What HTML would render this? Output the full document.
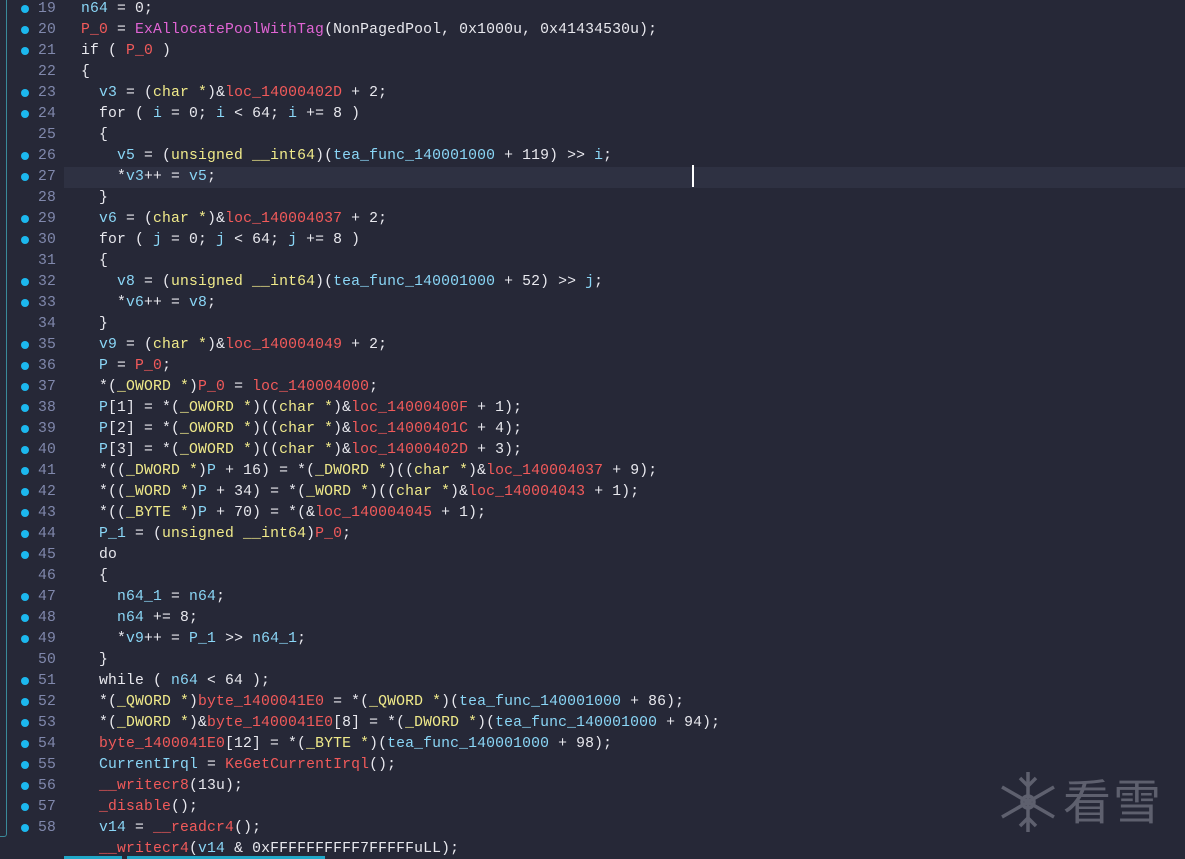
<!DOCTYPE html>
<html><head><meta charset="utf-8"><style>
html,body{margin:0;padding:0;background:#262837;width:1185px;height:859px;overflow:hidden;position:relative}
.frame{position:absolute;left:0;top:-5px;width:6px;height:840px;border:1px solid #3a8a9a;border-left:none;border-radius:0 3px 3px 0}
.code{position:absolute;left:0;top:-1.5px;font-family:"Liberation Mono",monospace;font-size:14.75px;letter-spacing:0.15px;line-height:21px;color:#e8e8ee}
.l{position:relative;height:21px;width:1185px}
.hlbg{position:absolute;left:64px;right:0;top:0;bottom:0;background:#2e3142}
.d{position:absolute;left:21px;top:6px;width:8px;height:8px;border-radius:50%;background:#1cb8ee}
.n{position:absolute;left:38px;color:#8088ac;width:24px;text-align:left}
.c{position:absolute;left:81px;white-space:pre}
.b{color:#8ad6f6}.r{color:#f25a5a}.p{color:#e064d4}.y{color:#f0ea8a}
.cur{position:absolute;left:692px;top:165px;width:2px;height:22px;background:#fff}
.wm{position:absolute;left:1063px;top:768px;font-family:"Noto Sans CJK SC",sans-serif;font-size:48px;color:#5e606e;letter-spacing:2px;line-height:60px}
.bar{position:absolute;top:856px;height:3px;background:#20a8c8}
</style></head><body>
<div class="frame"></div>
<div class="code"><div class="l"><i class="d"></i><span class="n">19</span><span class="c"><span class="b">n64</span> = 0;</span></div><div class="l"><i class="d"></i><span class="n">20</span><span class="c"><span class="r">P_0</span> = <span class="p">ExAllocatePoolWithTag</span>(NonPagedPool, 0x1000u, 0x41434530u);</span></div><div class="l"><i class="d"></i><span class="n">21</span><span class="c">if ( <span class="r">P_0</span> )</span></div><div class="l"><span class="n">22</span><span class="c">{</span></div><div class="l"><i class="d"></i><span class="n">23</span><span class="c">  <span class="b">v3</span> = (<span class="y">char *</span>)&amp;<span class="r">loc_14000402D</span> + 2;</span></div><div class="l"><i class="d"></i><span class="n">24</span><span class="c">  for ( <span class="b">i</span> = 0; <span class="b">i</span> &lt; 64; <span class="b">i</span> += 8 )</span></div><div class="l"><span class="n">25</span><span class="c">  {</span></div><div class="l"><i class="d"></i><span class="n">26</span><span class="c">    <span class="b">v5</span> = (<span class="y">unsigned __int64</span>)(<span class="b">tea_func_140001000</span> + 119) &gt;&gt; <span class="b">i</span>;</span></div><div class="l"><i class="hlbg"></i><i class="d"></i><span class="n">27</span><span class="c">    *<span class="b">v3</span>++ = <span class="b">v5</span>;</span></div><div class="l"><span class="n">28</span><span class="c">  }</span></div><div class="l"><i class="d"></i><span class="n">29</span><span class="c">  <span class="b">v6</span> = (<span class="y">char *</span>)&amp;<span class="r">loc_140004037</span> + 2;</span></div><div class="l"><i class="d"></i><span class="n">30</span><span class="c">  for ( <span class="b">j</span> = 0; <span class="b">j</span> &lt; 64; <span class="b">j</span> += 8 )</span></div><div class="l"><span class="n">31</span><span class="c">  {</span></div><div class="l"><i class="d"></i><span class="n">32</span><span class="c">    <span class="b">v8</span> = (<span class="y">unsigned __int64</span>)(<span class="b">tea_func_140001000</span> + 52) &gt;&gt; <span class="b">j</span>;</span></div><div class="l"><i class="d"></i><span class="n">33</span><span class="c">    *<span class="b">v6</span>++ = <span class="b">v8</span>;</span></div><div class="l"><span class="n">34</span><span class="c">  }</span></div><div class="l"><i class="d"></i><span class="n">35</span><span class="c">  <span class="b">v9</span> = (<span class="y">char *</span>)&amp;<span class="r">loc_140004049</span> + 2;</span></div><div class="l"><i class="d"></i><span class="n">36</span><span class="c">  <span class="b">P</span> = <span class="r">P_0</span>;</span></div><div class="l"><i class="d"></i><span class="n">37</span><span class="c">  *(<span class="y">_OWORD *</span>)<span class="r">P_0</span> = <span class="r">loc_140004000</span>;</span></div><div class="l"><i class="d"></i><span class="n">38</span><span class="c">  <span class="b">P</span>[1] = *(<span class="y">_OWORD *</span>)((<span class="y">char *</span>)&amp;<span class="r">loc_14000400F</span> + 1);</span></div><div class="l"><i class="d"></i><span class="n">39</span><span class="c">  <span class="b">P</span>[2] = *(<span class="y">_OWORD *</span>)((<span class="y">char *</span>)&amp;<span class="r">loc_14000401C</span> + 4);</span></div><div class="l"><i class="d"></i><span class="n">40</span><span class="c">  <span class="b">P</span>[3] = *(<span class="y">_OWORD *</span>)((<span class="y">char *</span>)&amp;<span class="r">loc_14000402D</span> + 3);</span></div><div class="l"><i class="d"></i><span class="n">41</span><span class="c">  *((<span class="y">_DWORD *</span>)<span class="b">P</span> + 16) = *(<span class="y">_DWORD *</span>)((<span class="y">char *</span>)&amp;<span class="r">loc_140004037</span> + 9);</span></div><div class="l"><i class="d"></i><span class="n">42</span><span class="c">  *((<span class="y">_WORD *</span>)<span class="b">P</span> + 34) = *(<span class="y">_WORD *</span>)((<span class="y">char *</span>)&amp;<span class="r">loc_140004043</span> + 1);</span></div><div class="l"><i class="d"></i><span class="n">43</span><span class="c">  *((<span class="y">_BYTE *</span>)<span class="b">P</span> + 70) = *(&amp;<span class="r">loc_140004045</span> + 1);</span></div><div class="l"><i class="d"></i><span class="n">44</span><span class="c">  <span class="b">P_1</span> = (<span class="y">unsigned __int64</span>)<span class="r">P_0</span>;</span></div><div class="l"><i class="d"></i><span class="n">45</span><span class="c">  do</span></div><div class="l"><span class="n">46</span><span class="c">  {</span></div><div class="l"><i class="d"></i><span class="n">47</span><span class="c">    <span class="b">n64_1</span> = <span class="b">n64</span>;</span></div><div class="l"><i class="d"></i><span class="n">48</span><span class="c">    <span class="b">n64</span> += 8;</span></div><div class="l"><i class="d"></i><span class="n">49</span><span class="c">    *<span class="b">v9</span>++ = <span class="b">P_1</span> &gt;&gt; <span class="b">n64_1</span>;</span></div><div class="l"><span class="n">50</span><span class="c">  }</span></div><div class="l"><i class="d"></i><span class="n">51</span><span class="c">  while ( <span class="b">n64</span> &lt; 64 );</span></div><div class="l"><i class="d"></i><span class="n">52</span><span class="c">  *(<span class="y">_QWORD *</span>)<span class="r">byte_1400041E0</span> = *(<span class="y">_QWORD *</span>)(<span class="b">tea_func_140001000</span> + 86);</span></div><div class="l"><i class="d"></i><span class="n">53</span><span class="c">  *(<span class="y">_DWORD *</span>)&amp;<span class="r">byte_1400041E0</span>[8] = *(<span class="y">_DWORD *</span>)(<span class="b">tea_func_140001000</span> + 94);</span></div><div class="l"><i class="d"></i><span class="n">54</span><span class="c">  <span class="r">byte_1400041E0</span>[12] = *(<span class="y">_BYTE *</span>)(<span class="b">tea_func_140001000</span> + 98);</span></div><div class="l"><i class="d"></i><span class="n">55</span><span class="c">  <span class="b">CurrentIrql</span> = <span class="r">KeGetCurrentIrql</span>();</span></div><div class="l"><i class="d"></i><span class="n">56</span><span class="c">  <span class="r">__writecr8</span>(13u);</span></div><div class="l"><i class="d"></i><span class="n">57</span><span class="c">  <span class="r">_disable</span>();</span></div><div class="l"><i class="d"></i><span class="n">58</span><span class="c">  <span class="b">v14</span> = <span class="r">__readcr4</span>();</span></div><div class="l"><span class="c">  <span class="r">__writecr4</span>(<span class="b">v14</span> &amp; 0xFFFFFFFFFF7FFFFFuLL);</span></div></div>
<div class="cur"></div>
<svg style="position:absolute;left:998px;top:770px" width="60" height="64" viewBox="0 0 60 64" stroke="#5e606e" stroke-width="3.5" fill="none">
<line x1="30" y1="2" x2="30" y2="62"/><line x1="4" y1="17" x2="56" y2="47"/><line x1="4" y1="47" x2="56" y2="17"/>
<polyline points="22,8 30,16 38,8"/><polyline points="22,56 30,48 38,56"/>
<circle cx="30" cy="32" r="6"/>
</svg>
<div class="wm">看雪</div>
<div class="bar" style="left:64px;width:58px"></div>
<div class="bar" style="left:127px;width:198px"></div>
</body></html>
